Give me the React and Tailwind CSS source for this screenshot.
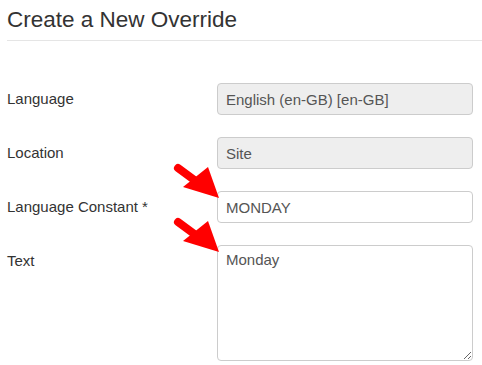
import React from 'react';

const font = { fontFamily: '"Liberation Sans", Arial, sans-serif' };

function Arrow() {
  return (
    <svg
      className="absolute left-[-46px] top-[-31px] pointer-events-none"
      width="50"
      height="42"
      viewBox="0 0 50 42"
    >
      <line x1="7" y1="8" x2="26" y2="22" stroke="#ff0000" strokeWidth="8" strokeLinecap="round" />
      <polygon points="12,27 37,7 48,38" fill="#ff0000" />
    </svg>
  );
}

function Field({ label, children, top }) {
  return (
    <>
      <div className={`flex text-[15px] text-[#333] ${top ? 'items-start pt-[5px]' : 'items-center'}`}>
        {label}
      </div>
      <div className="relative">{children}</div>
    </>
  );
}

const inputBase =
  'block w-full h-[32px] px-[8px] text-[15px] text-[#555] border border-[#cccccc] rounded-[4px] outline-none';

export default function App() {
  return (
    <div className="min-h-screen bg-white pl-[7px]" style={font}>
      <h2 className="pt-[7px] pb-[7px] text-[22.5px] leading-[26px] font-normal text-[#333] border-b border-[#e5e5e5]">
        Create a New Override
      </h2>

      <div className="mt-[42px] grid grid-cols-[210px_256px] gap-y-[22px]">
        <Field label="Language">
          <input disabled value="English (en-GB) [en-GB]" readOnly className={`${inputBase} bg-[#eeeeee]`} />
        </Field>

        <Field label="Location">
          <input disabled value="Site" readOnly className={`${inputBase} bg-[#eeeeee]`} />
        </Field>

        <Field label="Language Constant *">
          <input value="MONDAY" readOnly className={`${inputBase} bg-white`} />
          <Arrow />
        </Field>

        <Field label="Text" top>
          <textarea
            value="Monday"
            readOnly
            className="block w-full h-[116px] px-[8px] py-[4px] text-[15px] leading-[20px] text-[#555] bg-white border border-[#cccccc] rounded-[4px] outline-none resize-y"
          />
          <Arrow />
        </Field>
      </div>
    </div>
  );
}
